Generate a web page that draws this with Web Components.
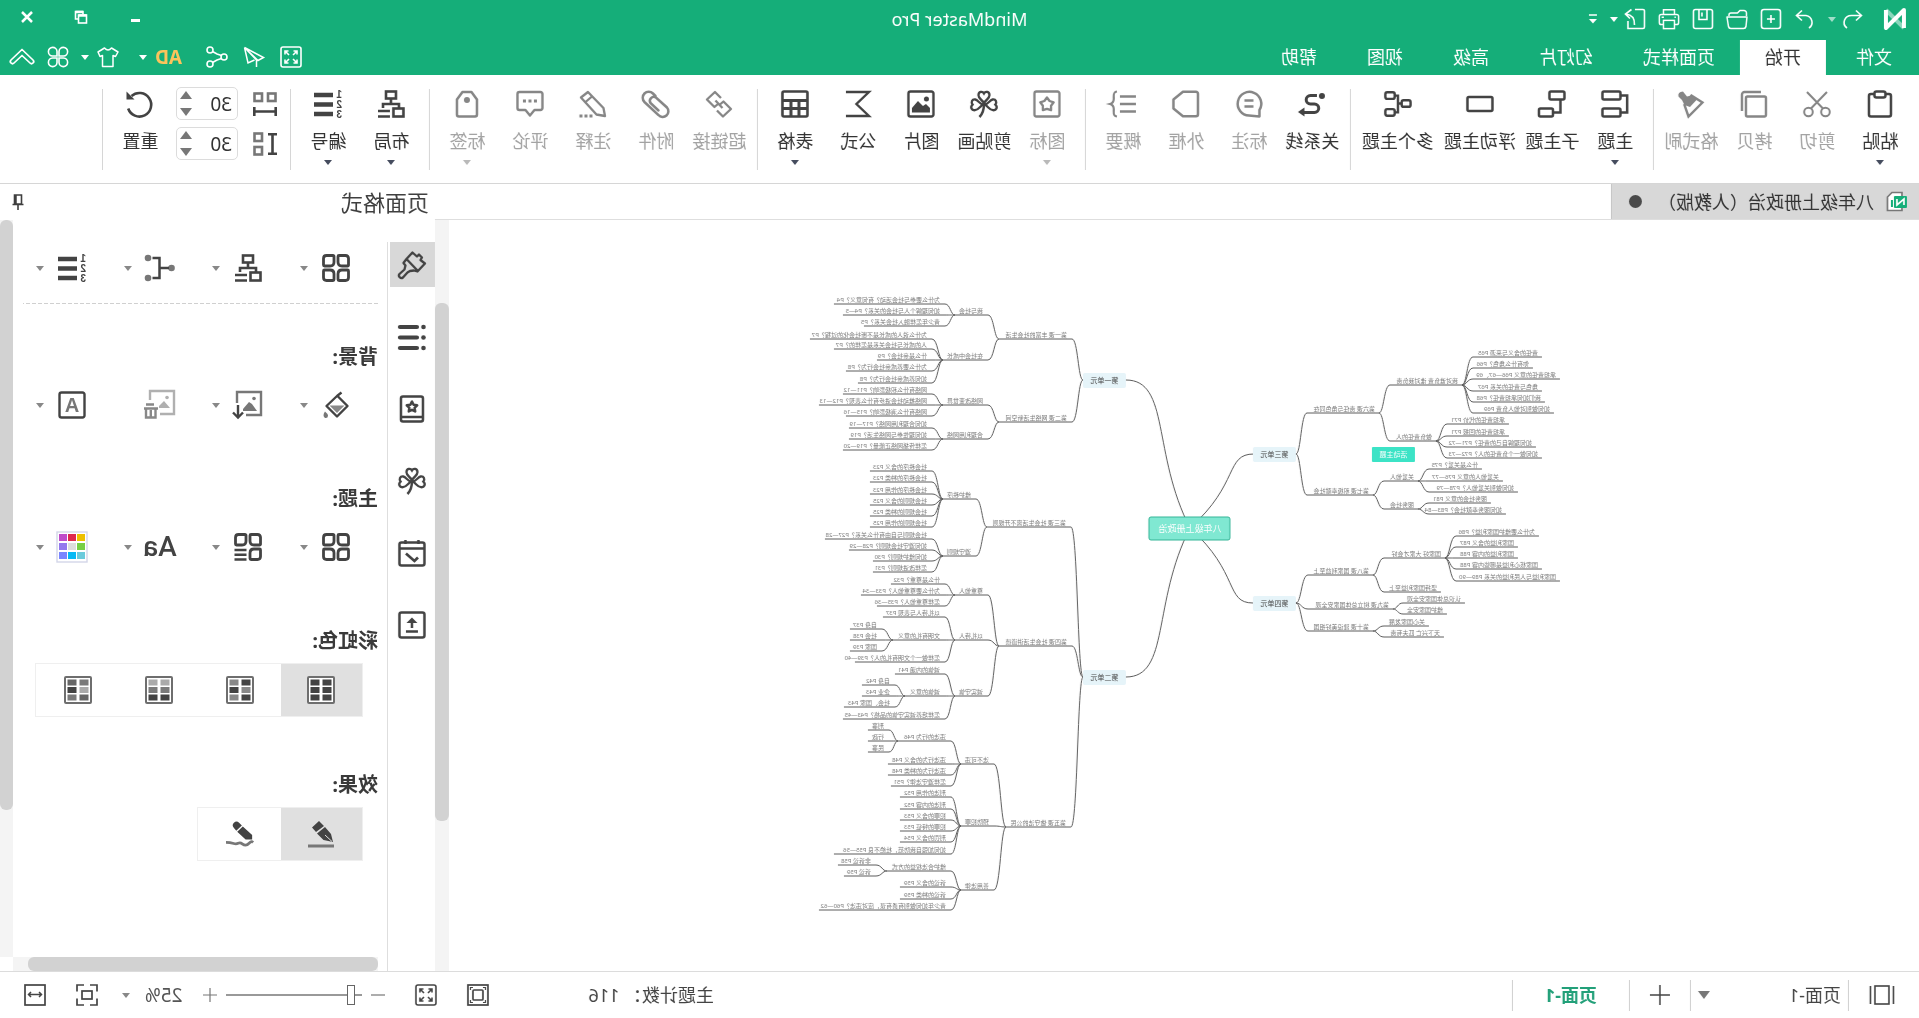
<!DOCTYPE html>
<html lang="zh-CN">
<head>
<meta charset="utf-8">
<title>MindMaster Pro</title>
<style>
  html { background: #fff; }
  body {
    margin: 0;
    height: 100vh;
    overflow: hidden;
    transform: scaleX(-1);
    font: 18px/24px "Noto Sans", "Noto Sans CJK SC", sans-serif;
    color: #3a3a3a;
    --green: #15ae79;
    --ink: #434343;
    --line: #d6d6d6;
    --thumb: #d2d2d2;
    --track: #f4f4f4;
  }
</style>
</head>
<body>
<mind-app></mind-app>

<script>
/* ---------- icon shapes, all on their own small grid ---------- */
const star = (cx, cy, r, k = 0.5) => {
  const p = [];
  for (let i = 0; i < 10; i++) {
    const a = -Math.PI / 2 + i * Math.PI / 5, q = i % 2 ? r * k : r;
    p.push((cx + q * Math.cos(a)).toFixed(1) + ',' + (cy + q * Math.sin(a)).toFixed(1));
  }
  return `<polygon points="${p.join(' ')}" stroke-linejoin="round"/>`;
};
const clover = `<path d="M14 13C11 9 8.5 8 8.5 5.2C8.5 1.5 12.5 .8 14 3.5C15.5 .8 19.5 1.5 19.5 5.2C19.5 8 17 9 14 13Z"/>
  <path d="M13 14.5C9.5 13.8 8 10 5.3 9.5C2 9 .8 12.5 2.6 14.6C0 17 1.5 20.6 5 20.2C8.5 19.8 9.5 17 13 14.5Z"/>
  <path d="M15 14.5C18.5 13.8 20 10 22.7 9.5C26 9 27.2 12.5 25.4 14.6C28 17 26.5 20.6 23 20.2C19.5 19.8 18.5 17 15 14.5Z"/>
  <path d="M14 14C14 20 15.5 24 18.5 27" stroke-width="2.5"/>`;
const swatches = (cols) => {
  let s = '<rect x="1" y="1" width="26" height="26" rx="1" fill="#fff" stroke="#6e6e6e" stroke-width="2"/>';
  cols.forEach((c, i) => { s += `<rect x="${3.5 + (i % 2) * 12}" y="${3.5 + Math.floor(i / 2) * 7.5}" width="9" height="6" fill="${c}" stroke="none"/>`; });
  return s;
};
const digits = `<g fill="currentColor" stroke="none" font-family="Liberation Sans, sans-serif" font-weight="bold" font-size="10"><text x="0" y="8">1</text><text x="0" y="18">2</text><text x="0" y="28">3</text></g>`;
const orgTop = `<rect x="9" y="1.5" width="10" height="7"/><path d="M14 8.5V13M6 18V14H22V18"/><rect x="1.5" y="18.5" width="10" height="8"/>`;
const petal = (x, y, a, b, c, d) => `<path d="M${x + a} ${y}H${x + 10.5 - b}q${b} 0 ${b} ${b}V${y + 10.5 - c}q0 ${c} -${c} ${c}H${x + d}q-${d} 0 -${d} -${d}V${y + a}q0 -${a} ${a} -${a}Z"/>`;
const petals3 = petal(1.5, 1.5, 3, 1, 4, 1) + petal(16, 1.5, 1, 3, 1, 4) + petal(1.5, 16, 1, 4, 1, 3);
const frame = `<rect x="1.5" y="1.5" width="25" height="25" rx="2"/>`;

const ICONS = {
  paste: [28, 2.5, `<rect x="3" y="4" width="22" height="22.5" rx="2"/><rect x="8.5" y="1.5" width="11" height="6" rx="2" fill="#fff"/>`],
  cut: [28, 2, `<circle cx="5.5" cy="22" r="4.3"/><circle cx="22.5" cy="22" r="4.3"/><path d="M8 18.5L24 2M20 18.5L4 2"/>`],
  copy: [28, 2.4, `<rect x="2" y="6.5" width="20" height="20" rx="1.5"/><path d="M7 2H23.5a2.5 2.5 0 0 1 2.5 2.5V21"/>`],
  painter: [28, 2.4, `<path d="M13.5 5.5L2.5 12.5L16.5 26.5L20.5 15Z"/><path d="M13.5 5.5L8 9.5L15 17L20.5 15L23 10L26.5 6.5Q27.5 2 22 1.5L18 6.5Z" fill="currentColor" stroke="none"/>`],
  topic: [28, 2.5, `<rect x="8.5" y="1.5" width="18" height="8" rx="1.5"/><rect x="8.5" y="18.5" width="18" height="8" rx="1.5"/><path d="M8.5 5.5H1.8V22.5H8.5"/>`],
  subtopic: [28, 2.5, `<rect x="1.5" y="1.5" width="15" height="8" rx="1.5"/><rect x="13" y="18.5" width="14" height="8" rx="1.5"/><path d="M5.5 9.5V22.5H13"/>`],
  floating: [28, 2.5, `<rect x="1.5" y="7" width="25" height="14" rx="1.5"/>`],
  multi: [30, 2.6, `<rect x="1.5" y="11" width="9.5" height="7" rx="2"/><rect x="18.5" y="2.5" width="10" height="7" rx="2"/><rect x="18.5" y="20.5" width="10" height="7" rx="2"/><path d="M11 14.5H15M18.5 6H15V24H18.5"/>`],
  relation: [28, 3, `<circle cx="4" cy="6" r="3" fill="currentColor" stroke="none"/><path d="M9 5.5H15.5a4.2 4.2 0 0 1 0 8.5H11.5a4.2 4.2 0 0 0 0 8.5H22"/><path d="M21.5 17.5L28 22L21.5 26.5Z" fill="currentColor" stroke="none"/>`],
  callout: [28, 2.5, `<path d="M3.5 26.5V20A11.8 11.8 0 1 1 14 25.5Q9 26 3.5 26.5Z" stroke-linejoin="round"/><path d="M9.5 10.5H18.5M9.5 16.5H18.5"/>`],
  boundary: [28, 2.5, `<path d="M4 1.8H17L26.5 9.5V18.5L17 26.2H4a2 2 0 0 1 -2 -2V3.8a2 2 0 0 1 2 -2Z" stroke-linejoin="round"/>`],
  summary: [28, 2.7, `<path d="M1 6.5H17M1 14H17M1 21.5H17"/><path d="M20 1.5C24.5 2 23 6 23.2 9Q23.3 13 27 14Q23.3 15 23.2 19C23 22 24.5 26 20 26.5" stroke-width="2.2"/>`],
  badge: [28, 2.3, frame + star(14, 14.5, 7, 0.62)],
  clover: [28, 2.3, clover],
  picture: [28, 2.4, frame + `<circle cx="8.5" cy="9" r="2.5" fill="currentColor" stroke="none"/><path d="M5 22.5V18L9 14L12 16L17 11L23 18V22.5Z" fill="currentColor" stroke="none"/>`],
  sigma: [28, 2.4, `<path d="M26 2H3L15.5 14L3 26H26"/>`],
  table: [28, 2.6, `<rect x="1.5" y="1.5" width="25" height="25" rx="1.5"/><path d="M2 10.5H26M2 18.5H26M10 11V26M18 11V26" stroke-width="3"/>`],
  link: [28, 2.3, `<path d="M12 8L18 2L26 9.5L18.5 17L15 14M16 20.5L10 26.5L2 19L9.5 11.5L13 14.5M10.5 18L17.5 10.5" stroke-linejoin="round"/>`],
  clip: [28, 2.5, `<path d="M14.5 6L17 3.5a6 6 0 0 1 8.5 8.5L11.5 25a5.5 5.5 0 0 1 -8.5 -7.5L14 7.5a4 4 0 0 1 5.5 5.5L11.5 20.5" stroke-linecap="round"/>`],
  note: [28, 2.3, `<path d="M19 2L26 7.5L10.5 24.5L2 26L3.5 18Z" stroke-linejoin="round"/><path d="M15 6.5L22 12.5"/><path d="M14.5 26H27.5" stroke-width="3" stroke-dasharray="3 2"/>`],
  comment: [28, 2.4, `<path d="M3.5 2H24.5a2 2 0 0 1 2 2V18a2 2 0 0 1 -2 2H18.5L14 25.5L9.5 20H3.5a2 2 0 0 1 -2 -2V4a2 2 0 0 1 2 -2Z" stroke-linejoin="round"/><path d="M7 11H21" stroke-width="3" stroke-dasharray="3 2.5"/>`],
  tag: [28, 2.5, `<path d="M9.5 2H18.5L24 9.5V24.5a2 2 0 0 1 -2 2H6a2 2 0 0 1 -2 -2V9.5Z" stroke-linejoin="round"/><circle cx="14" cy="10" r="3" fill="currentColor" stroke="none"/>`],
  layout: [28, 2.6, orgTop + `<path d="M15 21H27M15 26.5H27"/>`],
  numbering: [28, 4.5, digits + `<path d="M9 5H28M9 14.5H28M9 24H28"/>`],
  hgap: [24, 2.6, `<g stroke="#777"><rect x="1.5" y="1.5" width="7.5" height="7.5"/><rect x="15" y="1.5" width="7.5" height="7.5"/></g><path d="M1.3 15V24M22.7 15V24M1 19.5H23"/>`],
  vgap: [24, 2.6, `<g stroke="#777"><rect x="15" y="1.5" width="7.5" height="7.5"/><rect x="15" y="15" width="7.5" height="7.5"/></g><path d="M0 2.3H9M0 21.7H9M4.5 2V22"/>`],
  reset: [28, 2.6, `<path d="M22.5 6A11.8 11.8 0 1 0 25.8 18.5"/><path d="M19.5 9.5H27.5V1.5Z" fill="currentColor" stroke="none"/>`],

  logo: [24, 4, `<path d="M3 21V3L21 21V3" stroke-linejoin="round"/><path d="M3 21L12 12L21 3" opacity=".5"/>`],
  undo: [22, 1.6, `<path d="M8 2.5L2.5 7.5L8 12.5M2.5 7.5H12a7.5 7 0 0 1 5 12.5"/>`],
  redo: [22, 1.6, `<path d="M14 2.5L19.5 7.5L14 12.5M19.5 7.5H10a7.5 7 0 0 0 -3 12.5"/>`],
  add: [22, 1.6, `<rect x="1.5" y="1.5" width="19" height="19" rx="2.5"/><path d="M11 7V15M7 11H15"/>`],
  open: [22, 1.5, `<path d="M1.5 8V5a2.5 2.5 0 0 1 2.5 -2.5H8L10.5 5H17a2 2 0 0 1 2 2V8"/><path d="M1 8.5H21L19.5 18a2.5 2.5 0 0 1 -2.5 2H4.5a2.5 2.5 0 0 1 -2.5 -2Z" stroke-linejoin="round" transform="translate(0 .5)"/>`],
  save: [22, 1.6, `<rect x="1.5" y="1.5" width="19" height="19" rx="2"/><path d="M7 2V11.5H15V2M12 4.5V8.5"/>`],
  print: [24, 1.6, `<path d="M6 7V2H18V7M6 18H3.5a2 2 0 0 1 -2 -2V9a2 2 0 0 1 2 -2H20.5a2 2 0 0 1 2 2V16a2 2 0 0 1 -2 2H18"/><rect x="6" y="13.5" width="12" height="9"/><path d="M17.5 10H20M4.5 10H6"/>`],
  share: [22, 1.6, `<path d="M11 1.5H3a1.5 1.5 0 0 0 -1.5 1.5V19a1.5 1.5 0 0 0 1.5 1.5H18V13"/><path d="M14.5 1.5L20.5 6L16 10.5M20 6Q11 7 11.5 17"/>`],
  more: [10, 1.5, `<path d="M1 1H9"/><path d="M1 5H9L5 9.5Z" fill="currentColor" stroke="none"/>`],
  caret: [8, 0, `<path d="M0 2H8L4 7Z" fill="currentColor"/>`],
  up: [12, 0, `<path d="M0 10H12L6 2Z" fill="currentColor"/>`],
  down: [12, 0, `<path d="M0 2H12L6 10Z" fill="currentColor"/>`],
  min: [14, 3, `<path d="M2 10.5H11"/>`],
  restore: [14, 1.6, `<path d="M9 9H12.5V1.5H5V4.5"/><rect x="1.5" y="5" width="8" height="8"/><path d="M1.5 5.5H9.5M5 2H12.5" stroke-width="2.5"/>`],
  close: [14, 2.5, `<path d="M2 2L12 12M12 2L2 12"/>`],
  full: [22, 1.6, `<rect x="1" y="1" width="20" height="20" rx="2"/><path d="M5 8.5V5H8.5M5 5L9 9M13.5 5H17V8.5M17 5L13 9M5 13.5V17H8.5M5 17L9 13M17 13.5V17H13.5M17 17L13 13"/>`],
  send: [22, 1.5, `<path d="M20.5 1.5L1.5 11.5L7 14.5ZM20.5 1.5L17 17L10.5 14M20.5 1.5L8.5 14V21"/>`],
  nodes: [22, 1.6, `<circle cx="4" cy="11" r="3"/><circle cx="18" cy="4" r="3"/><circle cx="18" cy="18" r="3"/><path d="M6.5 9.5L11 8L15.5 5.5M6.5 12.5L11 14L15.5 16.5"/>`],
  shirt: [22, 1.5, `<path d="M7.5 2L1 6L3.5 10.5L6 9.5V20.5H16.5V9.5L19 10.5L21 6L14.5 2Q11 6 7.5 2Z" stroke-linejoin="round"/>`],
  apps: [22, 1.6, `<path d="M10 10V5.5A4.3 4.3 0 1 0 5.5 10ZM12 10H16.5A4.3 4.3 0 1 0 12 5.5ZM10 12H5.5A4.3 4.3 0 1 0 10 16.5ZM12 12V16.5A4.3 4.3 0 1 0 16.5 12Z"/>`],
  collapse: [26, 1.7, `<path d="M13 5.5L24 16a2 2 0 0 1 -3 3L13 11.5L5 19a2 2 0 0 1 -3 -3Z" stroke-linejoin="round"/>`],

  file: [22, 1.7, `<path d="M6 1.5H16L20.5 6V19.5H6Z" stroke="#777" fill="#fff"/><rect x="1" y="5" width="13" height="12" rx="1" fill="#15ae79" stroke="none"/><path d="M4 14V8L11 14V8" stroke="#fff"/><path d="M16 9V16" stroke="#15ae79" stroke-width="2"/>`],
  pin: [18, 1.6, `<path d="M5.5 2H12.5V11H5.5ZM3.5 11.5H14.5M9 12V17"/><path d="M11.5 2V11" stroke-width="2.5"/>`],

  grid: [28, 2.8, petals3 + petal(16, 16, 4, 1, 3, 1)],
  gridlines: [28, 2.8, petals3 + `<path d="M15.5 17H27.5M15.5 21.8H27.5M15.5 26.5H27.5" stroke-width="2.4"/>`],
  branch: [30, 2.5, `<g fill="#777" stroke="none"><circle cx="3.5" cy="15" r="3.3"/><circle cx="27" cy="5" r="3.3"/><circle cx="27" cy="25" r="3.3"/></g><path d="M6 15H15M22.5 5H15.5V25H22.5"/>`],
  bucket: [28, 2.4, `<path d="M5.5 14.5L13 22L20.5 14.5Z" fill="#888" stroke="none"/><path d="M8.5 1.5L13 5L23.5 15L13 25.5L2.5 15L12.5 5" stroke-linejoin="round"/><path d="M25 20.5q3 4 0 6.5q-3 .5 -3 -2.5q.5 -2 3 -4Z" fill="#777" stroke="none"/>`],
  bgimage: [30, 2.4, `<g stroke="#777"><path d="M17 25H2V2H26V13"/></g><path d="M6 21L11 14L14 12L20 19V21Z" fill="#777" stroke="none"/><circle cx="9" cy="8.5" r="1.8" fill="#777" stroke="none"/><path d="M25 15V27M20 22.5L25 27.5L30 22.5"/>`],
  bgclear: [32, 2.4, `<g stroke="#b0b0b0"><path d="M16 25H2V2H26V11"/></g><path d="M6 19L12 12L17 17V19Z" fill="#b0b0b0" stroke="none"/><circle cx="9" cy="8.5" r="1.8" fill="#b0b0b0" stroke="none"/><path d="M22 15.5H30M18 19.5H32M20.5 20V28.5H30V20M25.2 21V28"/>`],
  watermark: [28, 2.4, frame + `<text x="14" y="21" text-anchor="middle" font-family="Liberation Sans, sans-serif" font-weight="bold" font-size="20" fill="#777" stroke="none">A</text>`],
  palette: [32, 1.4, `<rect x="1" y="1" width="30" height="30" stroke="#d3d6e8" fill="#fff"/>` +
    ['#edc000', '#e0284e', '#c04bc9', '#76cf45', '#dddddd', '#9378ee', '#6bcbdc', '#06b9f5', '#7a86ff'].map((c, i) =>
      `<rect x="${3 + (i % 3) * 9}" y="${3 + Math.floor(i / 3) * 9}" width="8" height="7" fill="${c}" stroke="none"/>`).join('')],
  brush: [28, 2.3, `<path transform="matrix(-1 0 0 1 28 0)" stroke-linejoin="round" d="M8.5 8L14.5 1.5L19 5.5L21 3.5L24 6.5L22.5 9L27 12.5L19.5 20.5L16 19.5L12 20L9.5 21.5L5 26.5a2.5 2.5 0 0 1 -3.5 -3.5L6.5 18.5L7.5 14.5L5.5 12ZM8.5 8L20 20"/>`],
  list: [28, 4.2, `<path d="M9 4H26M9 14.5H26M9 25H26" stroke-linecap="round"/><g fill="currentColor" stroke="none"><circle cx="2.5" cy="4" r="2.3"/><circle cx="2.5" cy="14.5" r="2.3"/><circle cx="2.5" cy="25" r="2.3"/></g>`],
  book: [28, 2.5, `<rect x="3" y="1.5" width="22" height="25" rx="2"/><path d="M3 22H25"/>` + star(14, 12, 5.5, 0.5)],
  calendar: [28, 2.5, `<rect x="1.5" y="3.5" width="25" height="23" rx="2"/><path d="M2 9.5H26M7.5 1V5M20.5 1V5"/><path d="M20 14.5L11.5 22L8 18.5" stroke-width="2.7"/>`],
  upload: [28, 2.5, frame + `<path d="M8 20.5H20M14 17V8.5"/><path d="M8.5 12L14 6.5L19.5 12Z" fill="currentColor" stroke="none"/>`],
  rainbow1: [28, 1, swatches(['#434343', '#434343', '#434343', '#434343', '#434343', '#434343'])],
  rainbow2: [28, 1, swatches(['#434343', '#888', '#888', '#434343', '#434343', '#888'])],
  rainbow3: [28, 1, swatches(['#aaa', '#aaa', '#7a7a7a', '#7a7a7a', '#434343', '#434343'])],
  rainbow4: [28, 1, swatches(['#7a7a7a', '#666', '#aaa', '#434343', '#666', '#7a7a7a'])],
  pen: [28, 3, `<path d="M11 6L16 1L23 7.5L19 12ZM10 7L18 13.5L11.5 20L2 22L4 14Z" fill="currentColor" stroke="none"/><path d="M3 21.5L10 15" stroke="#e0e0e0" stroke-width="1"/><path d="M1 26H27" stroke="#777"/>`],
  sketch: [30, 3, `<path d="M13 6L16 3a3.5 3.5 0 0 1 5.5 5.5L19 11.5ZM12 7L18 12.5L9 21H2V16Z" fill="currentColor" stroke="none"/><path d="M1 24C4 21 5 27 9 27S13 23 17 25S21 24 30 24" stroke="#777"/>`],

  outline: [26, 1.6, `<path d="M1.5 4V22M24.5 4V22"/><rect x="6" y="4" width="14" height="18"/>`],
  plus: [20, 1.5, `<path d="M10 0V20M0 10H20"/>`],
  plusS: [14, 1.2, `<path d="M7 0V14M0 7H14"/>`],
  minusS: [14, 1.2, `<path d="M0 7H14"/>`],
  fitpage: [22, 1.7, `<rect x="1" y="1" width="20" height="20"/><rect x="6" y="6" width="10" height="10" rx="1"/><path d="M3.5 6V3.5H6M16 3.5H18.5V6M3.5 16V18.5H6M18.5 16V18.5H16" stroke-width="1.2"/>`],
  focus: [22, 1.7, `<path d="M1 7.5V1H8M14 1H21V7.5M1 14.5V21H8M14 21H21V14.5"/><rect x="6" y="7" width="10" height="8"/>`],
  fitwidth: [22, 1.7, `<rect x="1" y="1" width="20" height="20"/><path d="M4 10.5H18M7 8L4.5 10.5L7 13M15 8L17.5 10.5L15 13" stroke-width="1.5"/>`]
};

/* ---------- small base class ---------- */
class Base extends HTMLElement {
  connectedCallback() {
    if (this.shadowRoot) return;
    this.attachShadow({ mode: 'open' }).innerHTML = `<style>
      * { box-sizing: border-box; }
      button, input, select { font: inherit; color: inherit; border: 0; padding: 0; margin: 0; background: none; border-radius: 0; }
      button { display: flex; align-items: center; justify-content: center; }
      ${this.css()}</style>${this.html()}`;
  }
  css() { return ''; }
  html() { return '<slot></slot>'; }
}

customElements.define('app-icon', class extends Base {
  css() {
    const s = this.getAttribute('size') || ICONS[this.getAttribute('name')][0];
    return `:host { display: block; flex: none; width: ${s}px; height: ${s}px; } svg { display: block; width: 100%; height: 100%; overflow: visible; }`;
  }
  html() {
    const [box, w, shape] = ICONS[this.getAttribute('name')];
    return `<svg viewBox="0 0 ${box} ${box}" fill="none" stroke="${w ? 'currentColor' : 'none'}" stroke-width="${w}" aria-hidden="true">${shape}</svg>`;
  }
});

const ib = (name, label, cls = '', size = '') =>
  `<button class="${cls}" aria-label="${label}"><app-icon name="${name}"${size ? ` size="${size}"` : ''}></app-icon></button>`;

/* ---------- title bar and menu ---------- */
customElements.define('title-bar', class extends Base {
  css() {
    return `
    :host { display: block; background: var(--green); color: #fff; }
    .top { display: grid; grid-template-columns: 1fr auto 1fr; height: 40px; align-items: start; }
    .quick { display: flex; align-items: center; gap: 12px; height: 37px; padding-left: 12px; }
    .quick .logo { margin-right: 7px; }
    .tight { margin-left: -6px; }
    .dim { opacity: .6; }
    h1 { margin: 0; font-size: 18px; font-weight: 400; line-height: 38px; }
    .win { display: flex; justify-content: flex-end; height: 33px; }
    .win button { width: 54px; }
    .menu { display: flex; height: 35px; }
    nav { display: flex; flex: 1; padding-left: 2px; }
    nav button { padding: 0 25px; line-height: 35px; height: 35px; }
    nav button:first-child { margin-right: 5px; }
    nav button[aria-selected=true] { background: #fff; color: #333; }
    .tools { display: flex; align-items: center; gap: 12px; padding-right: 9px; height: 34px; }
    .trio { display: flex; gap: 15px; margin-right: 12px; }
    .pair { display: flex; align-items: center; gap: 8px; }
    .ads { margin-right: 8px; }
    .ad { font-size: 19px; font-weight: 700; color: #fbc45c; }`;
  }
  html() {
    const tabs = ['文件', '开始', '页面样式', '幻灯片', '高级', '视图', '帮助'];
    return `<div class="top">
      <div class="quick"><app-icon class="logo" name="logo" size="24"></app-icon>
        ${ib('undo', '撤销')}${ib('caret', '撤销列表', 'tight dim')}${ib('redo', '重做')}${ib('add', '新建')}${ib('open', '打开')}${ib('save', '保存')}${ib('print', '打印', '', 22)}${ib('share', '导出')}${ib('caret', '导出列表', 'tight')}${ib('more', '自定义')}
      </div>
      <h1>MindMaster Pro</h1>
      <div class="win">${ib('min', '最小化')}${ib('restore', '还原')}${ib('close', '关闭')}</div>
    </div>
    <div class="menu">
      <nav role="tablist">${tabs.map(t => `<button role="tab" aria-selected="${t === '开始'}">${t}</button>`).join('')}</nav>
      <div class="tools"><span class="trio">${ib('full', '全屏')}${ib('send', '发送')}${ib('nodes', '分享')}</span>
        <span class="pair ads"><button class="ad">AD</button>${ib('caret', '广告')}</span>
        <span class="pair">${ib('shirt', '皮肤')}${ib('caret', '皮肤列表')}</span>
        ${ib('apps', '应用')}${ib('collapse', '收起')}</div>
    </div>`;
  }
});

/* ---------- ribbon ---------- */
customElements.define('ribbon-button', class extends Base {
  css() {
    return `
    :host { display: block; width: 63px; color: var(--ink); }
    :host([wide]) { width: 82px; }
    :host([off]) { color: #868686; }
    button { width: 100%; flex-direction: column; padding-top: 15px; }
    .label { margin-top: 11px; line-height: 24px; white-space: nowrap; color: #333; }
    :host([off]) .label { color: #a3a3a3; }
    .caret { margin-top: 5px; color: #454c5e; }
    :host([off]) .caret { color: #b9b9b9; }`;
  }
  html() {
    return `<button ${this.hasAttribute('off') ? 'disabled' : ''}><app-icon name="${this.getAttribute('icon')}" size="28"></app-icon>
      <span class="label"><slot></slot></span>${this.hasAttribute('menu') ? '<app-icon class="caret" name="caret"></app-icon>' : ''}</button>`;
  }
});
customElements.define('ribbon-group', class extends Base {
  css() {
    return `:host { display: flex; }
    :host::after { content: ""; width: 1px; height: 81px; margin: 14px 6px 0; background: var(--line); }`;
  }
});
customElements.define('spin-field', class extends Base {
  css() {
    return `
    :host { display: flex; align-items: center; gap: 15px; height: 33px; color: var(--ink); }
    .box { display: flex; width: 62px; height: 33px; border: 1px solid #dcdcdc; border-radius: 5px; }
    input { width: 45px; padding-left: 5px; color: #333; font-size: 19px; }
    .arrows { display: flex; flex-direction: column; justify-content: center; gap: 5px; color: #777; }`;
  }
  html() {
    return `<app-icon name="${this.getAttribute('icon')}"></app-icon>
    <div class="box"><input type="text" value="30" aria-label="${this.getAttribute('label')}">
      <div class="arrows">${ib('up', '增加')}${ib('down', '减少')}</div></div>`;
  }
});
customElements.define('ribbon-bar', class extends Base {
  css() {
    return `
    :host { display: flex; height: 109px; padding-left: 7px; background: #fff; border-bottom: 1px solid var(--line); }
    .gaps { display: flex; flex-direction: column; gap: 7px; padding: 12px 4px 0 7px; }`;
  }
  html() {
    const b = (icon, text, attrs = '') => `<ribbon-button icon="${icon}" ${attrs}>${text}</ribbon-button>`;
    return `
    <ribbon-group>${b('paste', '粘贴', 'menu')}${b('cut', '剪切', 'off')}${b('copy', '拷贝', 'off')}${b('painter', '格式刷', 'off')}</ribbon-group>
    <ribbon-group>${b('topic', '主题', 'menu')}${b('subtopic', '子主题')}${b('floating', '浮动主题', 'wide')}${b('multi', '多个主题', 'wide')}</ribbon-group>
    <ribbon-group>${b('relation', '关系线')}${b('callout', '标注', 'off')}${b('boundary', '外框', 'off')}${b('summary', '概要', 'off')}</ribbon-group>
    <ribbon-group>${b('badge', '图标', 'off menu')}${b('clover', '剪贴画')}${b('picture', '图片')}${b('sigma', '公式')}${b('table', '表格', 'menu')}</ribbon-group>
    <ribbon-group>${b('link', '超链接', 'off')}${b('clip', '附件', 'off')}${b('note', '注释', 'off')}${b('comment', '评论', 'off')}${b('tag', '标签', 'off menu')}</ribbon-group>
    <ribbon-group>${b('layout', '布局', 'menu')}${b('numbering', '编号', 'menu')}</ribbon-group>
    <ribbon-group><div class="gaps"><spin-field icon="hgap" label="水平间距"></spin-field><spin-field icon="vgap" label="垂直间距"></spin-field></div>${b('reset', '重置')}</ribbon-group>`;
  }
});

/* ---------- scroll bar: start and length are percentages of the track ---------- */
customElements.define('scroll-bar', class extends Base {
  css() {
    const v = !this.hasAttribute('horizontal'), from = this.getAttribute('from'), len = this.getAttribute('length');
    return `
    :host { display: flex; flex: none; flex-direction: ${v ? 'column' : 'row'}; background: var(--track); ${v ? 'width' : 'height'}: 14px; }
    i { flex: 0 0 ${from}%; }
    b { flex: 0 0 ${len}%; background: var(--thumb); border-radius: 6px; }`;
  }
  html() { return '<i></i><b></b>'; }
});

/* ---------- mind map ----------
   node: [text, near, far, y, children]; near and far are distances from the root's axis */
const p = (y, list, near) => list.map(([t, far], i) => [t, near, far, y[i]]);
const UNITS = [
  { side: 1, text: '第一单元', near: 64, far: 107, y: 160, kids: [
    ['第一课 丰富的社会生活', 118, 191, 119, [
      ['我与社会', 202, 235, 95, p([84, 95, 106], [['为什么要参与社会活动？有何意义？P4', 356], ['如何理解个人与社会的关系？P4—5', 347], ['青少年怎样融入社会关系？P5', 326]], 245)],
      ['在社会中成长', 202, 247, 140, p([119, 129, 140, 151, 163], [['为什么说人的成长是不断社会化的过程？P7', 380], ['人的成长与社会关系是怎样的？P7', 356], ['什么是亲社会？P9', 313], ['为什么要养成亲社会行为？P8', 344], ['如何养成亲社会行为？P8', 332]], 258)]]],
    ['第二课 网络生活新空间', 118, 191, 202, [
      ['网络改变世界', 202, 247, 185, p([174, 185, 196], [['网络有什么积极影响？P11—12', 347], ['网络推动社会进步有什么表现？P12—13', 371], ['网络有什么消极影响？P15—16', 344]], 258)],
      ['合理利用网络', 202, 247, 219, p([208, 219, 230], [['如何合理利用网络？P17—19', 341], ['如何理性参与网络生活？P19', 341], ['怎样传播网络正能量？P19—20', 347]], 258)]]]] },
  { side: 1, text: '第二单元', near: 64, far: 107, y: 457, kids: [
    ['第三课 社会生活离不开规则', 119, 203, 307, [
      ['维护秩序', 214, 247, 279, p([251, 262, 274, 285, 296, 307], [['社会秩序的含义 P23', 320], ['社会秩序的种类 P23', 320], ['社会秩序的作用 P23', 320], ['社会规则的含义 P25', 320], ['社会规则的种类 P25', 320], ['社会规则的作用 P25', 320]], 258)],
      ['遵守规则', 214, 247, 336, p([319, 330, 341, 352], [['社会规则与自由有什么关系？P27—28', 365], ['如何遵守社会规则？P28—29', 341], ['如何维护规则？P30', 317], ['怎样改进规则？P31', 317]], 258)]]],
    ['第四课 社会生活讲道德', 118, 191, 426, [
      ['尊重他人', 202, 235, 375, p([364, 375, 386], [['什么是尊重？P32', 299], ['为什么要尊重他人？P33—34', 329], ['怎样尊重他人？P35—36', 313]], 245)],
      ['以礼待人', 202, 235, 420, [
        ['以礼待人与表现 P37', 245, 307, 397],
        ['文明有礼的意义', 245, 297, 420, p([409, 420, 431], [['自身 P37', 340], ['社会 P38', 340], ['国家 P39', 340]], 308)],
        ['怎样做一个文明有礼的人？P39—40', 245, 335, 442]]],
      ['诚实守信', 202, 235, 476, [
        ['诚信的内涵 P41', 245, 295, 454],
        ['诚信的意义', 245, 285, 476, p([465, 476, 487], [['自身 P42', 328], ['企业 P43', 328], ['社会、国家 P43', 346]], 295)],
        ['怎样培养诚实守信的品格？P43—45', 245, 347, 499]]]]],
    ['第五课 做守法的公民', 119, 184, 607, [
      ['法不可违', 196, 229, 544, [
        ['违法的行为 P46', 239, 292, 521, p([510, 521, 532], [['刑事', 322], ['行政', 322], ['民事', 322]], 301)],
        ['违法行为的含义 P48', 239, 302, 544], ['违法行为的种类 P48', 239, 302, 555], ['怎样遵守法律？P51', 239, 299, 566]]],
      ['预防犯罪', 196, 229, 606, p([577, 589, 600, 611, 622, 634], [['刑法的作用 P52', 290], ['刑法的内容 P52', 290], ['犯罪的含义 P53', 290], ['犯罪的特征 P53', 290], ['刑罚的含义 P54', 290], ['如何加强自我防范，杜绝不良 P55—56', 356]], 239)],
      ['善用法律', 196, 229, 670, [
        ['维护合法权益的方式', 239, 303, 651, p([645, 656], [['非诉讼 P58', 352], ['诉讼 P59', 346]], 314)],
        ['诉讼的含义 P59', 239, 290, 667], ['诉讼的种类 P59', 239, 290, 679], ['青少年如何做到有勇有谋，应对违法？P60—62', 239, 371, 690]]]]]] },
  { side: -1, text: '第三单元', near: 64, far: 106, y: 234, kids: [
    ['第六课 责任与角色同在', 117, 189, 193, [
      ['我对谁负责 谁对我负责', 200, 272, 165, p([137, 148, 159, 171, 182, 193], [['责任的含义与来源 P65', 352], ['你有什么角色？P66', 343], ['承担责任的意义 P66—67、69', 370], ['角色与责任的关系 P67', 352], ['我们如何承担责任？P68', 355], ['如何做到对他人负责 P69', 364]], 283)],
      ['做负责任的人', 200, 246, 221, p([204, 216, 227, 238], [['承担责任的代价 P71', 319], ['承担责任的回报 P71', 319], ['如何理解自己的责任？P71—72', 346], ['如何做一个负责任的人？P72—73', 352]], 257)]]],
    ['第七课 积极奉献社会', 117, 183, 275, [
      ['关爱他人', 194, 228, 261, p([249, 261, 272], [['什么是关爱？P75', 292], ['关爱他人的意义 P76—77', 313], ['如何做到关爱他人？P78—79', 328]], 239)],
      ['服务社会', 194, 228, 289, p([283, 294], [['服务社会的意义 P81', 301], ['如何服务奉献社会？P83—84', 316]], 239)]]]] },
  { side: -1, text: '第四单元', near: 63, far: 106, y: 383, kids: [
    ['第八课 国家利益至上', 118, 183, 355, [
      ['国家好 大家才会好', 194, 255, 338, p([316, 327, 338, 349, 361], [['为什么要维护国家利益？P86', 349], ['国家利益的含义 P87', 328], ['国家利益的内容 P88', 328], ['国家核心利益是哪些内容 P88', 352], ['国家利益与人民利益的关系 P89—90', 370]], 266)],
      ['坚持国家利益至上', 194, 251, 372]]],
    ['第九课 树立总体国家安全观', 118, 203, 389, [['认识总体国家安全观', 213, 275, 383], ['维护国家安全', 213, 257, 394]]],
    ['第十课 建设美好祖国', 118, 183, 411, [['关心国家发展', 194, 239, 406], ['天下兴亡 匹夫有责', 194, 254, 417]]]] }
];

customElements.define('mind-map', class extends Base {
  css() {
    return `:host { display: block; overflow: hidden; background: #fff; }
    svg { display: block; width: 1460px; height: 750px; }
    path { fill: none; stroke: #5c5c5c; stroke-width: 1; }
    text { font-size: 6px; fill: #7a7a7a; }
    .unit { font-size: 7px; fill: #444; }
    .root { font-size: 9px; }
    .white { fill: #fff; }`;
  }
  html() {
    const C = 729, paths = [], texts = [];
    const walk = (side, from, fy, kids) => kids.forEach(([t, near, far, y, sub]) => {
      const m = from + (near - from) * 0.45;
      paths.push(`M${C + side * from} ${fy}C${C + side * m} ${fy} ${C + side * m} ${y} ${C + side * near} ${y}H${C + side * far}`);
      texts.push(`<text x="${side > 0 ? C + near + 5 : C - far + 4}" y="${y - 2}">${t}</text>`);
      if (sub) walk(side, far, y, sub);
    });
    UNITS.forEach(u => {
      const wide = Math.abs(u.y - 308) > 100, s = u.side;
      paths.push(`M${C} 308C${C + s * (wide ? 38 : 50)} ${308 + (u.y - 308) * (wide ? 0.5 : 0.6)} ${C + s * (wide ? 20 : 35)} ${u.y} ${C + s * u.near} ${u.y}`);
      walk(s, u.far, u.y, u.kids);
      const x = s > 0 ? C + u.near : C - u.far;
      texts.push(`<rect x="${x}" y="${u.y - 7}" width="43" height="15" rx="2" fill="#e6f4f9"/><text class="unit" x="${x + 21.5}" y="${u.y + 3}" text-anchor="middle">${u.text}</text>`);
    });
    return `<svg viewBox="0 0 1460 750" role="img" aria-label="思维导图"><path d="${paths.join('')}"/>${texts.join('')}
      <rect x="${C - 225}" y="227" width="43" height="15" rx="1" fill="#3ce3c6"/><text class="unit white" x="${C - 203.5}" y="237" text-anchor="middle">活动主题</text>
      <rect x="${C - 40}" y="297" width="81" height="23" rx="2" fill="#80e8d2" stroke="#35b597"/><text class="root white" x="${C}" y="312" text-anchor="middle">八年级上册政治</text></svg>`;
  }
});

customElements.define('doc-area', class extends Base {
  css() {
    return `
    :host { display: flex; flex-direction: column; min-width: 0; }
    .tabs { display: flex; height: 36px; border-bottom: 1px solid #dedede; flex: none; }
    .tab { display: flex; align-items: center; height: 35px; width: 308px; padding-left: 11px; gap: 12px; background: #d8d8d8; color: #333; border-right: 1px solid #c6c6c6; justify-content: flex-start; white-space: nowrap; }
    .dot { width: 13px; height: 13px; border-radius: 50%; background: #4a4a4a; margin-left: 4px; }
    .view { display: flex; flex: 1; min-height: 0; }
    mind-map { flex: 1; min-width: 0; }`;
  }
  html() {
    return `<div class="tabs"><button class="tab"><app-icon name="file"></app-icon><span>八年级上册政治（人教版）</span><span class="dot"></span></button></div>
    <div class="view"><mind-map></mind-map><scroll-bar from="11" length="69"></scroll-bar></div>`;
  }
});

/* ---------- format panel ---------- */
customElements.define('side-rail', class extends Base {
  css() {
    return `:host { display: flex; flex: none; flex-direction: column; gap: 27px; width: 48px; margin-top: 22px; border-right: 1px solid #dedede; color: var(--ink); }
    button { width: 45px; height: 45px; } .on { background: #d8d8d8; }`;
  }
  html() {
    return ib('brush', '页面格式', 'on') + ib('list', '大纲') + ib('book', '图标') + ib('clover', '剪贴画') + ib('calendar', '任务') + ib('upload', '导出');
  }
});
customElements.define('tool-row', class extends Base {
  css() { return `:host { display: flex; padding-left: 28px; height: 28px; }`; }
});
customElements.define('tool-drop', class extends Base {
  css() {
    return `:host { display: block; flex: none; width: 88px; color: var(--ink); }
    :host([off]) { color: #888; }
    button { height: 28px; gap: 14px; justify-content: flex-start; }
    .face { display: flex; justify-content: center; align-items: center; width: 28px; height: 28px; font: 500 28px/28px Roboto, sans-serif; }
    .caret { color: #888; }`;
  }
  html() {
    const icon = this.getAttribute('icon');
    return `<button aria-label="${this.getAttribute('label')}"><span class="face">${icon ? `<app-icon name="${icon}"></app-icon>` : '<slot></slot>'}</span>
    ${this.hasAttribute('off') ? '' : '<app-icon class="caret" name="caret"></app-icon>'}</button>`;
  }
});
customElements.define('segment-bar', class extends Base {
  css() {
    return `:host { display: flex; width: max-content; margin-left: 15px; padding-right: 2px; height: 54px; border: 1px solid #efefef; color: var(--ink); }
    button { width: 81px; height: 52px; } button:first-of-type { background: #e0e0e0; }`;
  }
  html() { return this.getAttribute('icons').split(' ').map(n => ib(n, n, '', 28)).join(''); }
});
customElements.define('panel-section', class extends Base {
  css() {
    return `:host { display: block; height: 142px; }
    :host([segments]) { height: 144px; }
    h3 { margin: 0 0 19px; font-size: 20px; font-weight: 700; line-height: 30px; color: #3a3a3a; }
    :host([segments]) h3 { margin-bottom: 7px; }`;
  }
  html() { return `<h3>${this.getAttribute('heading')}</h3><slot></slot>`; }
});
customElements.define('format-panel', class extends Base {
  css() {
    return `
    :host { display: flex; flex-direction: column; width: 435px; flex: none; }
    header { display: flex; align-items: center; justify-content: space-between; height: 36px; padding: 0 9px 0 6px; flex: none; color: #3f3f3f; }
    h2 { margin: 0; font-size: 22px; font-weight: 400; line-height: 36px; }
    .body { display: flex; flex: 1; min-height: 0; }
    .col { display: flex; flex-direction: column; flex: 1; min-width: 0; }
    .content { flex: 1; min-height: 0; overflow: hidden; padding: 34px 10px 0 9px; }
    .rule { height: 1px; margin: 21px 0 38px; background: repeating-linear-gradient(90deg, #d0d0d0 0 4px, transparent 4px 6px); }
    .h { margin-left: 9px; }
    .v { width: 13px; margin-bottom: 14px; }`;
  }
  html() {
    const d = (icon, label, a = '') => `<tool-drop icon="${icon}" label="${label}" ${a}></tool-drop>`;
    return `<header><h2>页面格式</h2>${ib('pin', '固定')}</header>
    <div class="body"><side-rail></side-rail>
      <div class="col"><div class="content">
        <tool-row>${d('grid', '布局')}${d('layout', '结构')}${d('branch', '连线')}${d('numbering', '编号')}</tool-row>
        <div class="rule"></div>
        <panel-section heading="背景:"><tool-row>${d('bucket', '背景色')}${d('bgimage', '背景图片')}${d('bgclear', '删除背景', 'off')}${d('watermark', '水印')}</tool-row></panel-section>
        <panel-section heading="主题:"><tool-row>${d('grid', '主题')}${d('gridlines', '主题样式')}<tool-drop label="字体">Aa</tool-drop>${d('palette', '颜色')}</tool-row></panel-section>
        <panel-section heading="彩虹色:" segments><segment-bar icons="rainbow1 rainbow2 rainbow3 rainbow4"></segment-bar></panel-section>
        <panel-section heading="效果:" segments><segment-bar icons="pen sketch"></segment-bar></panel-section>
      </div><scroll-bar class="h" horizontal from="0" length="96"></scroll-bar></div>
      <scroll-bar class="v" from="0" length="80"></scroll-bar></div>`;
  }
});

/* ---------- status bar ---------- */
customElements.define('status-bar', class extends Base {
  css() {
    return `
    :host { display: flex; align-items: center; height: 47px; padding: 0 24px; border-top: 1px solid #dcdcdc; color: #444; background: #fff; flex: none; }
    i { width: 1px; height: 31px; background: #d0d0d0; }
    .outline { margin-right: 20px; }
    label { display: flex; align-items: center; width: 157px; height: 31px; padding-right: 7px; color: #777; }
    select { appearance: none; flex: 1; padding-left: 7px; color: #444; height: 31px; }
    .add { width: 60px; height: 31px; }
    .page { width: 116px; height: 31px; font-weight: 700; color: #22a079; }
    .space { flex: 1; }
    .count { margin-right: 100px; }
    .group { display: flex; align-items: center; gap: 30px; }
    .zoom { display: flex; align-items: center; gap: 9px; margin-right: -6px; color: #777; }
    .pct { gap: 15px; margin-left: 11px; color: #555; font-size: 19px; }
    .pct app-icon { color: #888; }
    input { appearance: none; width: 136px; height: 22px; background: linear-gradient(#999, #999) center / 100% 2px no-repeat; }
    input::-webkit-slider-thumb { appearance: none; width: 8px; height: 20px; background: #fff; border: 1px solid #666; }`;
  }
  html() {
    return `${ib('outline', '大纲视图', 'outline')}<i></i>
    <label><select aria-label="页面"><option>页面-1</option></select><app-icon name="down"></app-icon></label><i></i>
    ${ib('plus', '新建页面', 'add')}<i></i><button class="page">页面-1</button><i></i>
    <span class="space"></span><span class="count">主题计数： 116</span>
    <div class="group">${ib('fitpage', '适合页面')}${ib('full', '全屏')}
      <div class="zoom">${ib('minusS', '缩小')}<input type="range" min="0" max="100" value="5" aria-label="缩放">${ib('plusS', '放大')}<button class="pct">25%<app-icon name="caret"></app-icon></button></div>
      ${ib('focus', '聚焦')}${ib('fitwidth', '适合宽度')}</div>`;
  }
});

customElements.define('mind-app', class extends Base {
  css() {
    return `:host { display: flex; flex-direction: column; height: 100vh; }
    title-bar, ribbon-bar { flex: none; }
    main { display: flex; flex: 1; min-height: 0; }
    doc-area { flex: 1; }`;
  }
  html() {
    return `<title-bar></title-bar><ribbon-bar></ribbon-bar><main><doc-area></doc-area><format-panel></format-panel></main><status-bar></status-bar>`;
  }
});
</script>
</body>
</html>
